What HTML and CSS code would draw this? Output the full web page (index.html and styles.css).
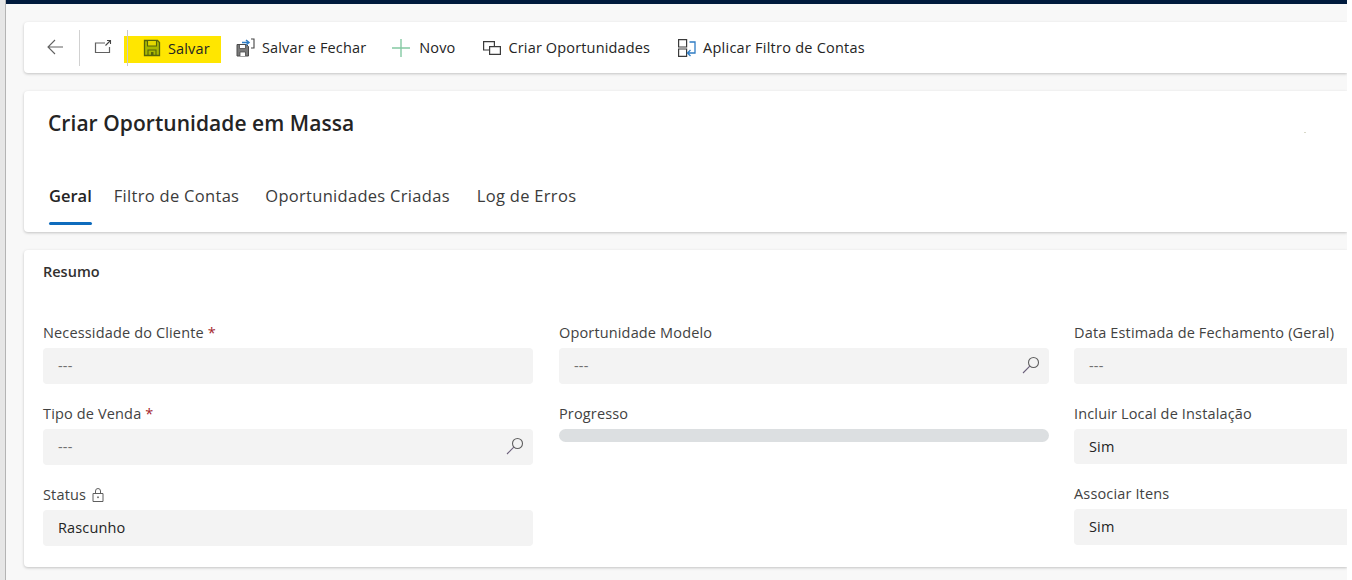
FILE: index.html
```html
<!DOCTYPE html>
<html lang="pt">
<head>
<meta charset="utf-8">
<title>Criar Oportunidade em Massa</title>
<link rel="stylesheet" href="styles.css">
</head>
<body>
<div class="frame">
  <div class="rail"></div>
  <div class="main">
    <div class="topbar"></div>
    <div class="content">
      <div class="card toolbar">
        <button class="tool back" aria-label="Voltar">
          <svg width="20" height="20" viewBox="0 0 20 20"><path d="M18 10H3M10 3l-7 7 7 7" fill="none" stroke="#616161" stroke-width="1.1"/></svg>
        </button>
        <span class="divider"></span>
        <button class="tool popout" aria-label="Abrir">
          <svg width="18" height="18" viewBox="0 0 18 18"><path d="M11 5H1.500v9.500H15.500V9" fill="none" stroke="#616161" stroke-width="1.200"/><path d="M11.500 7.500 16 3M13 2.500h3.500V6" fill="none" stroke="#444" stroke-width="1.100"/></svg>
        </button>
        <button class="tool save">
          <svg class="ico" width="18" height="18" viewBox="0 0 18 18"><path d="M1.500 1.500h13l2 2v13h-15z" fill="#a9b800" stroke="#56650a" stroke-width="1.300"/><path d="M4.500 2v5h9V2" fill="#e3d800" stroke="#56650a" stroke-width="1.100"/><path d="M5 16v-5h8v5" fill="none" stroke="#56650a" stroke-width="1.100"/><path d="M8 13h2.500v3H8z" fill="#56650a"/></svg>
          <span>Salvar</span>
        </button>
        <button class="tool saveclose">
          <svg class="ico" width="19" height="19" viewBox="0 0 19 19"><path d="M1 6.500h9.500l2 2V18H1z" fill="#7a7a7a" stroke="#4a4a4a"/><path d="M3.500 7v3.500h6V7" fill="#fff" stroke="#4a4a4a" stroke-width=".8"/><path d="M4 18v-4h5.500v4" fill="#fff" stroke="#4a4a4a" stroke-width=".8"/><path d="M6 4.500h6.500M10 2l3 2.500L10 7" fill="none" stroke="#2f7cc4" stroke-width="1.500"/><path d="M15 1h3v9h-3" fill="none" stroke="#444" stroke-width="1.100"/></svg>
          <span>Salvar e Fechar</span>
        </button>
        <button class="tool new">
          <svg class="ico" width="18" height="18" viewBox="0 0 18 18"><path d="M9 0v18M0 9h18" stroke="#84c9a3" stroke-width="1.400" fill="none"/></svg>
          <span>Novo</span>
        </button>
        <button class="tool create">
          <svg class="ico" width="18" height="14" viewBox="0 0 18 14"><path d="M6 9H.6V.6h10.800V5" fill="none" stroke="#3b3b3b" stroke-width="1.200"/><path d="M6.600 5.600h10.800v7.800H6.600z" fill="none" stroke="#3b3b3b" stroke-width="1.200"/></svg>
          <span>Criar Oportunidades</span>
        </button>
        <button class="tool apply">
          <svg class="ico" width="18" height="18" viewBox="0 0 18 18"><path d="M.6.600h8v7.400h-8zM.6 10h8v7.400h-8z" fill="none" stroke="#3b3b3b" stroke-width="1.200"/><path d="M11.500 3h5.500v11h-7M12.500 11l-3 3 3 3" fill="none" stroke="#2f7cc4" stroke-width="1.300"/></svg>
          <span>Aplicar Filtro de Contas</span>
        </button>
      </div>

      <div class="card header">
        <h1 class="title">Criar Oportunidade em Massa</h1>
        <span class="speck"></span>
        <div class="tabs">
          <a class="tab active">Geral</a>
          <a class="tab t2">Filtro de Contas</a>
          <a class="tab t3">Oportunidades Criadas</a>
          <a class="tab t4">Log de Erros</a>
        </div>
      </div>

      <div class="card section">
        <h2 class="section-title">Resumo</h2>
        <div class="columns">
          <div class="col">
            <div class="field">
              <label class="label">Necessidade do Cliente <span class="req">*</span></label>
              <div class="input empty">---</div>
            </div>
            <div class="field">
              <label class="label">Tipo de Venda <span class="req">*</span></label>
              <div class="input empty">---
                <svg class="search" width="18" height="18" viewBox="0 0 18 18"><circle cx="11.500" cy="6.500" r="5" fill="none" stroke="#5f5f5f" stroke-width="1.100"/><path d="M7.800 10.200 1 17" fill="none" stroke="#6b5f7a" stroke-width="1.100"/></svg>
              </div>
            </div>
            <div class="field">
              <label class="label">Status
                <svg class="lock" width="12" height="14" viewBox="0 0 12 14"><path d="M1 5.500h10v8H1zM3.500 5.500V3a2.500 2.500 0 0 1 5 0v2.500" fill="none" stroke="#5f5f5f"/><rect x="5.200" y="8.500" width="1.600" height="1.600" fill="#5f5f5f"/></svg>
              </label>
              <div class="input">Rascunho</div>
            </div>
          </div>
          <div class="col">
            <div class="field">
              <label class="label">Oportunidade Modelo</label>
              <div class="input empty">---
                <svg class="search" width="18" height="18" viewBox="0 0 18 18"><circle cx="11.500" cy="6.500" r="5" fill="none" stroke="#5f5f5f" stroke-width="1.100"/><path d="M7.800 10.200 1 17" fill="none" stroke="#6b5f7a" stroke-width="1.100"/></svg>
              </div>
            </div>
            <div class="field">
              <label class="label">Progresso</label>
              <div class="progress"></div>
            </div>
          </div>
          <div class="col col-last">
            <div class="field">
              <label class="label">Data Estimada de Fechamento (Geral)</label>
              <div class="input empty">---</div>
            </div>
            <div class="field">
              <label class="label">Incluir Local de Instalação</label>
              <div class="input short">Sim</div>
            </div>
            <div class="field">
              <label class="label">Associar Itens</label>
              <div class="input">Sim</div>
            </div>
          </div>
        </div>
      </div>
    </div>
  </div>
  <div class="gutter"></div>
</div>
</body>
</html>
```
FILE: styles.css
```css
* { box-sizing: border-box; }
html, body { margin: 0; padding: 0; height: 100%; overflow: hidden; background: #fff; }
body { font-family: "Open Sans", "Noto Sans", "Liberation Sans", sans-serif; font-size: 14.5px; letter-spacing: .15px; color: #242424; }
.frame { display: flex; width: 1352px; height: 580px; }
.rail { width: 6px; background: #e6e6e6; border-right: 1px solid #b4b4b4; }
.main { width: 1341px; background: #f8f8f8; overflow: hidden; display: flex; flex-direction: column; }
.gutter { width: 5px; background: #fff; }
.topbar { height: 4px; background: #001a3d; flex: none; }
.content { padding: 18px 0 0 18px; display: flex; flex-direction: column; gap: 18px; }
.card { background: #fff; border-radius: 4px 0 0 4px; box-shadow: 0 1px 3px rgba(0,0,0,.22); }

.toolbar { height: 51px; display: flex; align-items: center; padding-left: 21px; }
.tool { position: relative; display: flex; align-items: center; height: 27px; padding: 0; border: 0; background: none; font: inherit; letter-spacing: inherit; color: #242424; white-space: nowrap; }
.back { width: 21px; margin-top: -1px; }
.divider { width: 1px; height: 36px; background: #d1d1d1; margin: 0 14px 0 13px; }
.popout { width: 18px; margin-top: -2px; }
.save { width: 97px; margin-left: 12px; margin-top: 4px; background: #ffe600; padding: 0 0 3px 19px; }
.save::before { content: ""; position: absolute; left: 3px; top: -6px; width: 1px; height: 36px; background: #c8c8c8; }
.save .ico { margin-right: 7px; }
.saveclose { margin-left: 15px; }
.saveclose .ico { margin-right: 7px; }
.new { margin-left: 26px; }
.new .ico { margin-right: 9px; }
.create { margin-left: 27px; }
.create .ico { margin-right: 8px; }
.apply { margin-left: 28px; letter-spacing: .24px; }
.apply .ico { margin-right: 7px; }

.header { position: relative; height: 141px; padding: 17px 0 0 24px; display: flex; flex-direction: column; }
.title { margin: 0; font-size: 21px; line-height: 30px; font-weight: 600; letter-spacing: .05px; color: #242424; }
.speck { position: absolute; left: 1280px; top: 41px; width: 2px; height: 1px; background: #d8d8c8; }
.tabs { display: flex; margin-top: 46px; margin-left: 1px; }
.tab { position: relative; display: block; font-size: 16.5px; letter-spacing: .3px; line-height: 24px; height: 41px; color: #3b3b3b; white-space: nowrap; }
.tab.active { font-weight: 600; letter-spacing: 0; color: #242424; }
.tab.active::after { content: ""; position: absolute; left: 0; right: 0; bottom: 0; height: 3px; border-radius: 2px; background: #0f6cbd; }
.t2 { margin-left: 22px; }
.t3 { margin-left: 26px; }
.t4 { margin-left: 27px; }

.section { height: 317px; padding: 12px 0 0 19px; overflow: hidden; }
.section-title { margin: 0; font-size: 14.5px; line-height: 20px; font-weight: 600; letter-spacing: 0; color: #323130; }
.columns { display: flex; gap: 26px; margin-top: 39px; width: 1600px; }
.col { width: 490px; display: flex; flex-direction: column; gap: 18px; }
.col-last { margin-left: -1px; }
.field { display: flex; flex-direction: column; }
.label { height: 27px; line-height: 24px; display: flex; align-items: center; gap: 4px; white-space: nowrap; padding-bottom: 3px; color: #424242; }
.req { color: #a4262c; }
.input { position: relative; height: 36px; line-height: 36px; background: #f3f3f3; border-radius: 4px; padding-left: 15px; color: #242424; }
.input.short { height: 35px; line-height: 35px; }
.input.empty { color: #707070; }
.search { position: absolute; right: 9px; top: 8px; }
.lock { margin-left: 2px; }
.progress { height: 13px; border-radius: 7px; background: #dcdfe1; }
```
